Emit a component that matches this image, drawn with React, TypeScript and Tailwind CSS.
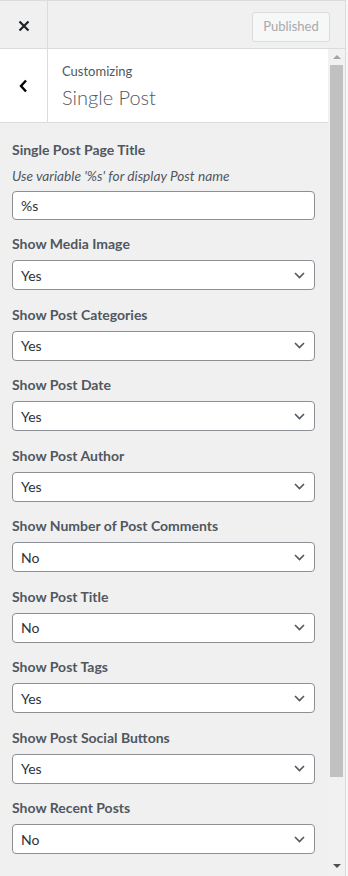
const FONT = '"Lato", "Noto Sans", sans-serif';

type Field = { label: string; value: string };

const SELECTS: Field[] = [
  { label: 'Show Media Image', value: 'Yes' },
  { label: 'Show Post Categories', value: 'Yes' },
  { label: 'Show Post Date', value: 'Yes' },
  { label: 'Show Post Author', value: 'Yes' },
  { label: 'Show Number of Post Comments', value: 'No' },
  { label: 'Show Post Title', value: 'No' },
  { label: 'Show Post Tags', value: 'Yes' },
  { label: 'Show Post Social Buttons', value: 'Yes' },
  { label: 'Show Recent Posts', value: 'No' },
];

function SelectField({ label, value }: Field) {
  return (
    <div className="mb-[14.5px]">
      <div className="text-[14px] leading-[20px] font-bold text-[#50575e]">{label}</div>
      <div className="mt-[6px] h-[30px] w-[303px] bg-white border border-[#8c8f94] rounded-[4px] flex items-center justify-between pl-[8px] pr-[9px]">
        <span className="text-[14px] text-[#2c3338]">{value}</span>
        <svg width="11" height="7" viewBox="0 0 11 7" fill="none">
          <path d="M1 1l4.5 4.5L10 1" stroke="#50575e" strokeWidth="1.6" />
        </svg>
      </div>
    </div>
  );
}

export default function App() {
  return (
    <div className="w-[348px] h-[876px] bg-[#f6f7f7] overflow-hidden" style={{ fontFamily: FONT }}>
      <div className="w-[346px] h-full border-r border-[#dcdcde] bg-[#f0f0f1] flex flex-col">
        {/* top bar */}
        <div className="h-[49px] flex border-t border-b border-[#dcdcde] shrink-0">
          <div className="w-[48px] border-r border-[#dcdcde] flex items-center justify-center pt-[3px]">
            <svg width="12" height="12" viewBox="0 0 12 12">
              <path d="M1.5 1.5l9 9M10.5 1.5l-9 9" stroke="#1d2327" strokeWidth="2.2" />
            </svg>
          </div>
          <div className="flex-1 flex items-start justify-end pr-[15px] pt-[11px]">
            <div className="h-[30px] w-[78px] rounded-[3px] border border-[#dcdcde] bg-[#f6f7f7] flex items-center justify-center text-[13px] text-[#a7aaad]">
              Published
            </div>
          </div>
        </div>

        <div className="flex flex-1 min-h-0">
          {/* panel */}
          <div className="w-[328px] flex flex-col">
            <div className="h-[74px] bg-white flex border-b border-[#dcdcde] shrink-0">
              <div className="w-[48px] border-r border-[#dcdcde] flex items-center justify-center">
                <svg width="9" height="14" viewBox="0 0 9 14">
                  <path d="M7 1.5L2 7l5 5.5" stroke="#000" strokeWidth="2.4" fill="none" />
                </svg>
              </div>
              <div className="pl-[14px] pt-[13px]">
                <div className="text-[13px] leading-[18px] text-[#50575e]">Customizing</div>
                <div className="text-[20px] leading-[28px] font-light text-[#50575e] mt-[3px]">Single Post</div>
              </div>
            </div>

            <div className="pl-[12px] pt-[17px]">
              <div className="text-[14px] leading-[20px] font-bold text-[#50575e]">Single Post Page Title</div>
              <div className="mt-[6px] text-[13.7px] leading-[20px] italic text-[#50575e]">
                Use variable '%s' for display Post name
              </div>
              <div className="mt-[5px] mb-[14px] h-[29px] w-[303px] bg-white border border-[#8c8f94] rounded-[4px] flex items-center pl-[8px]">
                <span className="text-[14px] text-[#2c3338]">%s</span>
              </div>
              {SELECTS.map((f) => (
                <SelectField key={f.label} {...f} />
              ))}
            </div>
          </div>

          {/* scrollbar */}
          <div className="w-[17px] bg-[#f1f1f1] flex flex-col items-center">
            <div className="h-[16px] flex items-center justify-center">
              <div className="w-0 h-0 border-l-[4px] border-r-[4px] border-b-[4px] border-l-transparent border-r-transparent border-b-[#a3a3a3]" />
            </div>
            <div className="w-[13px] h-[712px] bg-[#c1c1c1]" />
            <div className="flex-1" />
            <div className="h-[16px] mb-[2px] flex items-center justify-center">
              <div className="w-0 h-0 border-l-[4px] border-r-[4px] border-t-[4px] border-l-transparent border-r-transparent border-t-[#505050]" />
            </div>
          </div>
        </div>
      </div>
    </div>
  );
}
